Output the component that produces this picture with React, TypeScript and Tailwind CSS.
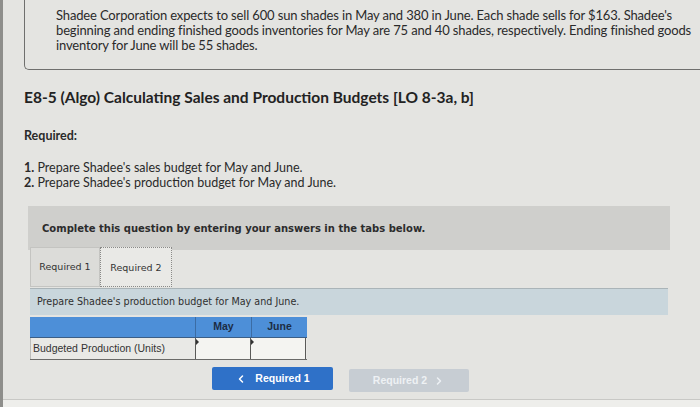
import { ChevronLeft, ChevronRight } from "lucide-react";

export default function App() {
  return (
    <div className="relative h-[407px] w-[700px] overflow-hidden bg-[#e4e4e1] font-['Lato',sans-serif] text-[#2a2a2a]">
      <div className="flex h-full border-l-[3px] border-[#8e8e8b]">
        <div className="flex w-full flex-col">
          {/* scenario box */}
          <div className="ml-[21px] h-[70px] whitespace-nowrap rounded-bl-[5px] border-b-[1.5px] border-l-[1.5px] border-[#6f6f6d] pl-[31px] pt-[8px] text-[13px] leading-[15px] tracking-[-0.15px]">
            Shadee Corporation expects to sell 600 sun shades in May and 380 in June. Each shade sells for $163. Shadee's
            <br />
            beginning and ending finished goods inventories for May are 75 and 40 shades, respectively. Ending finished goods
            <br />
            inventory for June will be 55 shades.
          </div>

          <h1 className="ml-[21px] mt-[17px] text-[15.5px] font-bold leading-[20px] text-[#222]">
            E8-5 (Algo) Calculating Sales and Production Budgets [LO 8-3a, b]
          </h1>

          <p className="ml-[21px] mt-[21px] text-[12.5px] font-bold leading-[16px]">Required:</p>

          <ol className="ml-[21px] mt-[16px] text-[12.5px] leading-[15px]">
            <li>
              <span className="font-bold">1.</span> Prepare Shadee's sales budget for May and June.
            </li>
            <li>
              <span className="font-bold">2.</span> Prepare Shadee's production budget for May and June.
            </li>
          </ol>

          {/* instruction band */}
          <div className="ml-[25px] mt-[16px] flex h-[44px] w-[642px] items-center bg-[#cfcfcc] pl-[14px] font-['DejaVu_Sans',sans-serif] text-[10px] font-bold text-[#2c2c2c]">
            Complete this question by entering your answers in the tabs below.
          </div>

          {/* tabs */}
          <div className="ml-[27px] mt-[-3px] flex h-[40px] items-stretch font-['DejaVu_Sans',sans-serif] text-[9.5px] text-[#333]">
            <div className="flex w-[70px] items-center justify-center border border-[#c4c4c1] bg-[#dcdcd9]">Required 1</div>
            <div className="flex w-[72px] items-center justify-center border-[1.5px] border-dotted border-[#8a8a88] bg-[#e9e9e6] pt-[2px]">
              Required 2
            </div>
          </div>

          <div className="ml-[27px] mt-[1px] flex h-[27px] w-[638px] items-center border-t border-[#aab4b8] bg-[#c9d6dc] pl-[7px] font-['DejaVu_Sans',sans-serif] text-[9.6px] text-[#2f2f2f]">
            Prepare Shadee's production budget for May and June.
          </div>

          {/* table */}
          <div className="ml-[27px] mt-[2px] w-[277px] font-['Liberation_Sans',sans-serif] text-[10.5px]">
            <div className="flex h-[21px] border-b border-[#3b5e86] bg-[#4d8fd8] text-[#1c2c44]">
              <div className="w-[165px]" />
              <div className="flex w-[56px] items-center justify-center border-l border-[#3b6ca4] font-bold">May</div>
              <div className="flex w-[56px] items-center justify-center border-l border-[#3b6ca4] font-bold">June</div>
            </div>
            <div className="flex h-[22px] border-b border-[#6a6a68] bg-[#e9e9e6]">
              <div className="flex w-[165px] items-center border-l border-[#bdbdba] pl-[2px] text-[#333]">
                Budgeted Production (Units)
              </div>
              <div className="relative w-[56px] border-x border-[#5a5a58] bg-[#f4f4f1]">
                <span className="absolute left-0 top-[1px] h-0 w-0 border-y-[3px] border-l-[3px] border-y-transparent border-l-[#333]" />
              </div>
              <div className="relative w-[55px] border-r border-[#5a5a58] bg-[#f4f4f1]">
                <span className="absolute left-0 top-[1px] h-0 w-0 border-y-[3px] border-l-[3px] border-y-transparent border-l-[#333]" />
              </div>
            </div>
          </div>

          {/* nav buttons */}
          <div className="ml-[209px] mt-[7px] flex items-start gap-[16px] font-['Liberation_Sans',sans-serif] text-[10.5px] font-bold">
            <button className="flex h-[23px] w-[121px] items-center justify-center gap-[8px] rounded-[2px] bg-[#2f71c8] text-white">
              <ChevronLeft className="h-3 w-3" strokeWidth={3} />
              Required 1
            </button>
            <button className="mt-[2px] flex h-[23px] w-[120px] items-center justify-center gap-[6px] rounded-[2px] bg-[#c7cdd3] text-[#eef1f4]">
              Required 2
              <ChevronRight className="h-3 w-3" strokeWidth={3} />
            </button>
          </div>

          <div className="mt-[7px] border-b border-[#c8c8c5]" />
          <div className="flex-1 bg-[#eeeeeb]" />
        </div>
      </div>
    </div>
  );
}
